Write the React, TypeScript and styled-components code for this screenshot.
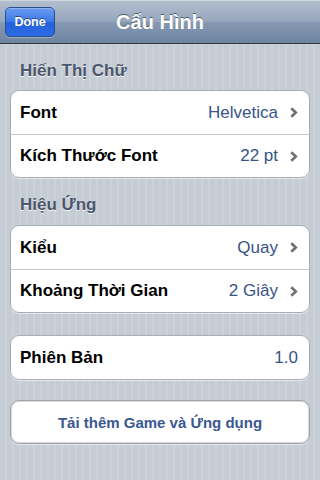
import React from "react";
import styled, { createGlobalStyle } from "styled-components";

const GlobalStyle = createGlobalStyle`
  html, body {
    margin: 0;
    padding: 0;
  }
  body {
    font-family: "Liberation Sans", Arial, sans-serif;
    -webkit-font-smoothing: antialiased;
  }
`;

const Screen = styled.div`
  width: 320px;
  height: 480px;
  overflow: hidden;
  background: repeating-linear-gradient(
    90deg,
    #c5ccd4 0px,
    #c5ccd4 5px,
    #cbd2d9 5px,
    #cbd2d9 7px
  );
`;

const NavBar = styled.div`
  display: grid;
  grid-template-columns: 1fr auto 1fr;
  align-items: center;
  height: 44px;
  padding: 0 5px;
  border-top: 1px solid #cdd5df;
  border-bottom: 1px solid #2d3642;
  box-sizing: border-box;
  background: linear-gradient(
    #b3bfcf 0%,
    #94a5bb 50%,
    #8699b2 50%,
    #6e84a2 100%
  );
`;

const DoneButton = styled.button`
  justify-self: start;
  width: 50px;
  height: 30px;
  padding: 0;
  border: 1px solid #2a4f8f;
  border-radius: 5px;
  background: linear-gradient(#6a9bf0 0%, #3b77e6 50%, #2362dc 51%, #2b6be2 100%);
  box-shadow: 0 1px 0 rgba(255, 255, 255, 0.3), inset 0 1px 0 rgba(255, 255, 255, 0.25);
  color: #fff;
  font-family: "Liberation Sans", Arial, sans-serif;
  font-weight: bold;
  font-size: 12.5px;
  text-shadow: 0 -1px 0 rgba(0, 0, 0, 0.45);
`;

const Title = styled.div`
  color: #fff;
  font-weight: bold;
  font-size: 20px;
  text-shadow: 0 -1px 0 rgba(0, 0, 0, 0.5);
`;

const Content = styled.div`
  padding: 0 10px;
`;

const SectionHeader = styled.div<{ $height?: number }>`
  height: ${(p) => p.$height ?? 46}px;
  box-sizing: border-box;
  padding: 17px 0 0 10px;
  font-size: 17px;
  line-height: 20px;
  font-weight: bold;
  color: #4c566c;
  text-shadow: 0 1px 0 rgba(255, 255, 255, 0.8);
`;

const Group = styled.div<{ $gap?: number }>`
  margin-top: ${(p) => p.$gap ?? 0}px;
  background: #fff;
  border: 1px solid #a9aeb5;
  border-radius: 9px;
  box-shadow: 0 1px 0 rgba(255, 255, 255, 0.55);
  overflow: hidden;
`;

const Row = styled.div`
  display: flex;
  align-items: center;
  height: 43px;
  box-sizing: border-box;
  padding: 0 11px 0 9px;

  & + & {
    border-top: 1px solid #c9c9c9;
  }
`;

const Label = styled.span`
  flex: 1;
  font-size: 17px;
  font-weight: bold;
  color: #000;
`;

const Value = styled.span`
  font-size: 17px;
  color: #385487;
`;

const Chevron = styled.svg`
  margin-left: 12px;
  flex: none;
`;

const ActionButton = styled.div`
  margin-top: 20px;
  height: 44px;
  box-sizing: border-box;
  display: flex;
  align-items: center;
  justify-content: center;
  background: #fff;
  border: 1px solid #9da2a9;
  border-radius: 9px;
  box-shadow: 0 1px 0 rgba(255, 255, 255, 0.55), inset 0 0 0 1px #d8dade;
  font-size: 15px;
  font-weight: bold;
  color: #3a5892;
`;

function Arrow() {
  return (
    <Chevron width="8" height="11" viewBox="0 0 8 11">
      <path d="M1.3 1.3 L5.8 5.5 L1.3 9.7" fill="none" stroke="#6f6f6f" strokeWidth="2.6" />
    </Chevron>
  );
}

type Item = { label: string; value: string; arrow?: boolean };

function SettingRow({ label, value, arrow = true }: Item) {
  return (
    <Row>
      <Label>{label}</Label>
      <Value>{value}</Value>
      {arrow && <Arrow />}
    </Row>
  );
}

export default function App() {
  return (
    <Screen>
      <GlobalStyle />
      <NavBar>
        <DoneButton>Done</DoneButton>
        <Title>Cấu Hình</Title>
        <span />
      </NavBar>
      <Content>
        <SectionHeader>Hiến Thị Chữ</SectionHeader>
        <Group>
          <SettingRow label="Font" value="Helvetica" />
          <SettingRow label="Kích Thước Font" value="22 pt" />
        </Group>
        <SectionHeader $height={47}>Hiệu Ứng</SectionHeader>
        <Group>
          <SettingRow label="Kiểu" value="Quay" />
          <SettingRow label="Khoảng Thời Gian" value="2 Giây" />
        </Group>
        <Group $gap={22}>
          <SettingRow label="Phiên Bản" value="1.0" arrow={false} />
        </Group>
        <ActionButton>Tải thêm Game và Ứng dụng</ActionButton>
      </Content>
    </Screen>
  );
}
